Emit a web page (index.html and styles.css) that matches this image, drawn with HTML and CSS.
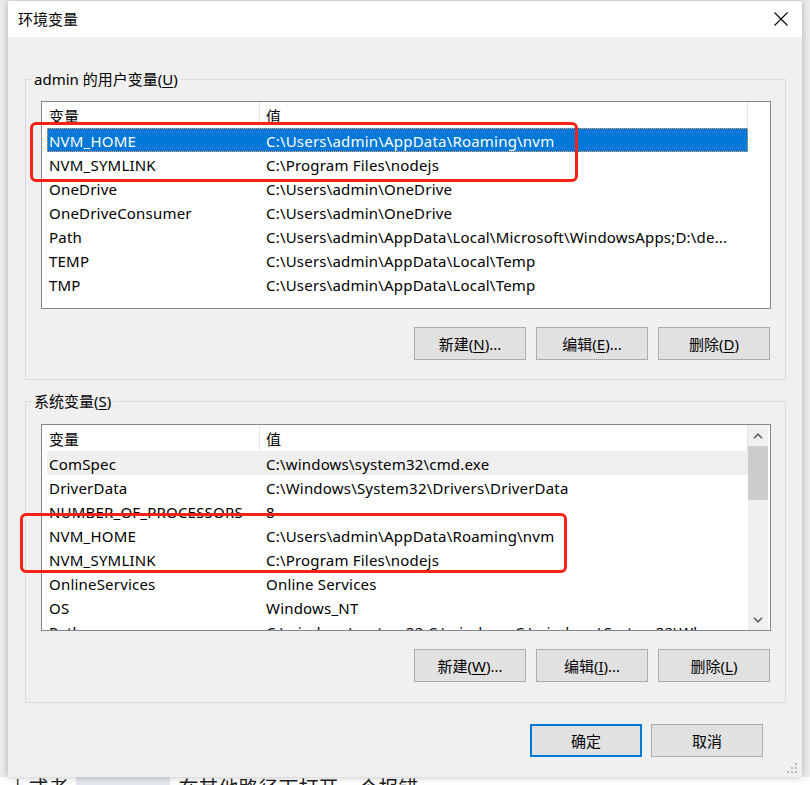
FILE: index.html
```html
<!DOCTYPE html>
<html lang="zh-CN">
<head>
<meta charset="utf-8">
<title>环境变量</title>
<link rel="stylesheet" href="styles.css">
</head>
<body>
<div class="stage">
  <div class="dialog">
    <div class="titlebar">
      <span class="title">环境变量</span>
      <svg class="close" width="14" height="14" viewBox="0 0 14 14"><path d="M0.5 0.5 L13.5 13.5 M13.5 0.5 L0.5 13.5" stroke="#000" stroke-width="1.1" fill="none"/></svg>
    </div>
    <div class="content">
      <div class="group group-user">
        <div class="legend">admin 的用户变量(<u>U</u>)</div>
        <div class="list list-user">
          <div class="list-body">
            <div class="header"><div class="hcell hcell1">变量</div><div class="hcell hcell2">值</div></div>
            <div class="row selected"><div class="cell c1">NVM_HOME</div><div class="cell c2">C:\Users\admin\AppData\Roaming\nvm</div></div>
            <div class="row"><div class="cell c1">NVM_SYMLINK</div><div class="cell c2">C:\Program Files\nodejs</div></div>
            <div class="row"><div class="cell c1">OneDrive</div><div class="cell c2">C:\Users\admin\OneDrive</div></div>
            <div class="row"><div class="cell c1">OneDriveConsumer</div><div class="cell c2">C:\Users\admin\OneDrive</div></div>
            <div class="row"><div class="cell c1">Path</div><div class="cell c2">C:\Users\admin\AppData\Local\Microsoft\WindowsApps;D:\de...</div></div>
            <div class="row"><div class="cell c1">TEMP</div><div class="cell c2">C:\Users\admin\AppData\Local\Temp</div></div>
            <div class="row"><div class="cell c1">TMP</div><div class="cell c2">C:\Users\admin\AppData\Local\Temp</div></div>
          </div>
        </div>
        <div class="btns">
          <button class="btn">新建(<u>N</u>)...</button>
          <button class="btn">编辑(<u>E</u>)...</button>
          <button class="btn">删除(<u>D</u>)</button>
        </div>
      </div>

      <div class="group group-sys">
        <div class="legend">系统变量(<u>S</u>)</div>
        <div class="list list-sys">
          <div class="list-body">
            <div class="header"><div class="hcell hcell1">变量</div><div class="hcell hcell2">值</div></div>
            <div class="row hover"><div class="cell c1">ComSpec</div><div class="cell c2">C:\windows\system32\cmd.exe</div></div>
            <div class="row"><div class="cell c1">DriverData</div><div class="cell c2">C:\Windows\System32\Drivers\DriverData</div></div>
            <div class="row"><div class="cell c1">NUMBER_OF_PROCESSORS</div><div class="cell c2">8</div></div>
            <div class="row"><div class="cell c1">NVM_HOME</div><div class="cell c2">C:\Users\admin\AppData\Roaming\nvm</div></div>
            <div class="row"><div class="cell c1">NVM_SYMLINK</div><div class="cell c2">C:\Program Files\nodejs</div></div>
            <div class="row"><div class="cell c1">OnlineServices</div><div class="cell c2">Online Services</div></div>
            <div class="row"><div class="cell c1">OS</div><div class="cell c2">Windows_NT</div></div>
            <div class="row"><div class="cell c1">Path</div><div class="cell c2">C:\windows\system32;C:\windows;C:\windows\System32\Wbem;...</div></div>
          </div>
          <div class="vscroll">
            <div class="sarrow"><svg width="10" height="6" viewBox="0 0 10 6"><path d="M1 5.2 L5 1.2 L9 5.2" stroke="#606060" stroke-width="1.6" fill="none"/></svg></div>
            <div class="thumb"></div>
            <div class="track"></div>
            <div class="sarrow"><svg width="10" height="6" viewBox="0 0 10 6"><path d="M1 0.8 L5 4.8 L9 0.8" stroke="#606060" stroke-width="1.6" fill="none"/></svg></div>
          </div>
        </div>
        <div class="btns">
          <button class="btn">新建(<u>W</u>)...</button>
          <button class="btn">编辑(<u>I</u>)...</button>
          <button class="btn">删除(<u>L</u>)</button>
        </div>
      </div>

      <div class="footer">
        <button class="btn btn-primary">确定</button>
        <button class="btn">取消</button>
      </div>
    </div>
    <svg class="grip" width="12" height="12" viewBox="0 0 12 12">
      <rect x="9" y="1" width="2" height="2" fill="#b9b9b9"/>
      <rect x="5" y="5" width="2" height="2" fill="#b9b9b9"/>
      <rect x="9" y="5" width="2" height="2" fill="#b9b9b9"/>
      <rect x="1" y="9" width="2" height="2" fill="#b9b9b9"/>
      <rect x="5" y="9" width="2" height="2" fill="#b9b9b9"/>
      <rect x="9" y="9" width="2" height="2" fill="#b9b9b9"/>
    </svg>
  </div>
</div>
<div class="under">
  <span class="u-bar">|</span><span class="u-text">或者</span><span class="u-code">cmd.exe</span><span class="u-text">在其他路径下打开一个报错</span>
</div>
<div class="mark mark-user"></div>
<div class="mark mark-sys"></div>
</body>
</html>
```

FILE: styles.css
```css
* { box-sizing: border-box; }

body {
  margin: 0;
  width: 810px;
  height: 785px;
  overflow: hidden;
  position: relative;
  background: #ececec;
  font-family: "Noto Sans", "Noto Sans CJK SC", sans-serif;
  font-size: 15px;
  color: #000;
}

.stage {
  padding: 1px 0 0 8px;
}

.dialog {
  width: 794px;
  height: 776px;
  background: #f0f0f0;
  box-shadow: 0 0 7px rgba(0, 0, 0, 0.28);
  position: relative;
}

.titlebar {
  height: 36px;
  background: #fff;
  display: flex;
  align-items: center;
  justify-content: space-between;
  padding: 0 14px 0 10px;
}

.title {
  font-family: "Noto Sans CJK SC", sans-serif;
  font-size: 15px;
  line-height: 20px;
}

.content {
  padding: 42px 16px 0 17px;
}

.group {
  border: 1px solid #dcdcdc;
}

.group-sys {
  margin-top: 21px;
}

.legend {
  width: fit-content;
  height: 20px;
  line-height: 20px;
  margin: -11px 0 0 6px;
  padding: 0 2px;
  background: #f0f0f0;
}

u {
  text-decoration: underline;
  text-underline-offset: 2px;
  text-decoration-thickness: 1px;
}

.list {
  margin: 12px 0 0 15px;
  width: 730px;
  height: 208px;
  border: 1px solid #828790;
  background: #fff;
  display: flex;
  overflow: hidden;
}

.list-sys {
  margin-top: 13px;
  height: 207px;
}

.list-body {
  width: 706px;
  flex: none;
}

.header {
  display: flex;
  height: 26px;
}

.hcell {
  height: 26px;
  line-height: 26px;
  border-right: 1px solid #e5e5e5;
  white-space: nowrap;
  padding-top: 1px;
}

.hcell1 {
  width: 218px;
  padding-left: 7px;
}

.hcell2 {
  width: 488px;
  padding-left: 6px;
}

.row {
  display: flex;
  height: 24px;
  line-height: 24px;
  margin-left: 5px;
  width: 701px;
  white-space: nowrap;
  letter-spacing: 0.2px;
}

.cell {
  overflow: hidden;
  padding-top: 1px;
}

.c1 {
  width: 213px;
  padding-left: 2px;
}

.c2 {
  width: 488px;
  padding-left: 6px;
}

.row.selected {
  background: #0078d7;
  color: #fff;
  outline: 1px dotted #f0a060;
  outline-offset: -1px;
}

.row.hover {
  background: #efefef;
}

.vscroll {
  width: 20px;
  margin-right: 2px;
  background: #f0f0f0;
  display: flex;
  flex-direction: column;
}

.sarrow {
  height: 21px;
  display: flex;
  align-items: center;
  justify-content: center;
}

.thumb {
  height: 54px;
  background: #cdcdcd;
}

.track {
  flex: 1;
}

.btns {
  display: flex;
  justify-content: flex-end;
  gap: 10px;
  margin-top: 18px;
  padding: 0 15px 19px 0;
}

.group-sys .btns {
  padding-bottom: 20px;
}

.btn {
  width: 112px;
  height: 33px;
  border: 1px solid #adadad;
  background: #e1e1e1;
  font: inherit;
  color: #000;
  padding: 0;
  display: flex;
  align-items: center;
  justify-content: center;
}

.footer {
  display: flex;
  justify-content: flex-end;
  gap: 9px;
  margin-top: 21px;
  padding-right: 23px;
}

.btn-primary {
  border: 2px solid #0078d7;
}

.grip {
  position: absolute;
  right: 4px;
  bottom: 3px;
}

.under {
  height: 8px;
  overflow: hidden;
  background: #fff;
  display: flex;
  align-items: flex-start;
  font-family: "Noto Sans CJK SC", sans-serif;
  font-size: 20px;
  line-height: 22px;
  padding-left: 15px;
  color: #222;
}

.u-bar {
  margin-right: 8px;
}

.u-code {
  background: #e4e8ee;
  padding: 0 8px;
  margin: 0 8px;
  color: #e4e8ee;
}

.mark {
  position: absolute;
  border: 3px solid #f52218;
  border-radius: 6px;
}

.mark-user {
  left: 30px;
  top: 122px;
  width: 548px;
  height: 60px;
}

.mark-sys {
  left: 20px;
  top: 513px;
  width: 547px;
  height: 60px;
}
```
